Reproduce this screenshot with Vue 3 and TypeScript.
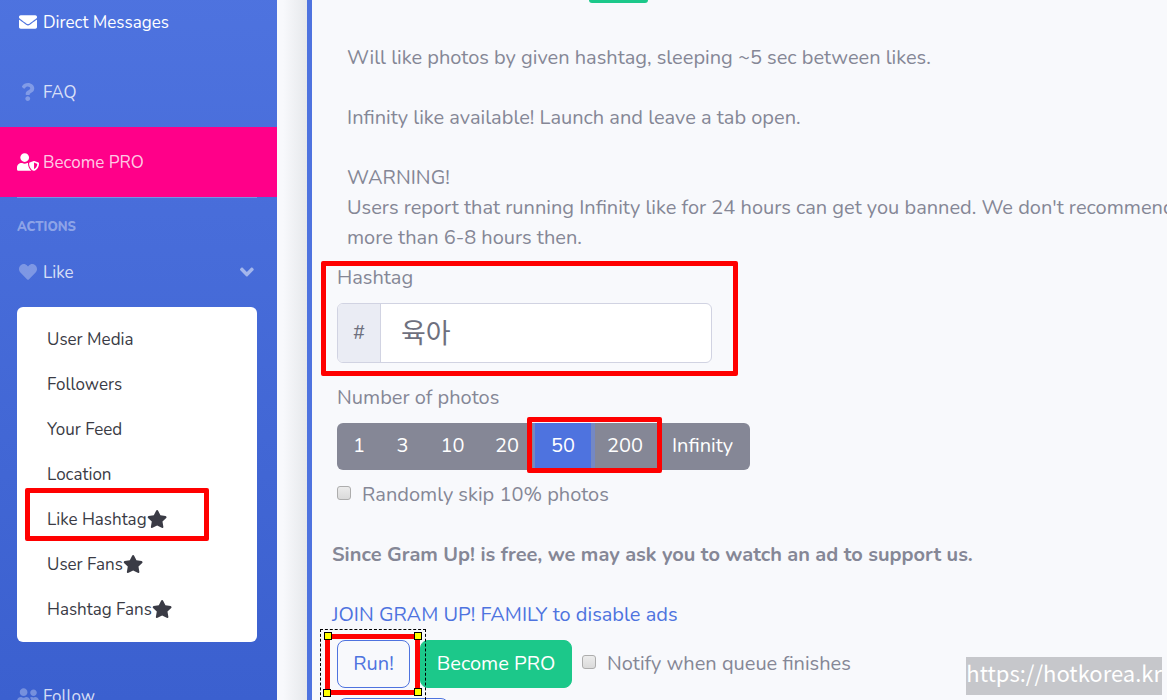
<script setup lang="ts">
import { ref } from 'vue'

interface Icon {
  box: string
  path: string
}

const icons: Record<string, Icon> = {
  envelope: {
    box: '0 0 512 512',
    path: 'M502.3 190.8c3.9-3.1 9.7-.2 9.7 4.7V400c0 26.5-21.5 48-48 48H48c-26.5 0-48-21.5-48-48V195.6c0-5 5.7-7.8 9.7-4.7 22.4 17.4 52.1 39.5 154.1 113.6 21.1 15.4 56.7 47.8 92.2 47.6 35.7.3 72-32.8 92.3-47.6 102-74.1 131.6-96.3 154-113.7zM256 320c23.2.4 56.6-29.2 73.4-41.4 132.7-96.3 142.8-104.7 173.4-128.7 5.8-4.5 9.2-11.5 9.2-18.9v-19c0-26.5-21.5-48-48-48H48c-26.5 0-48 21.5-48 48v19c0 7.4 3.4 14.3 9.2 18.9 30.6 23.9 40.7 32.4 173.4 128.7 16.8 12.2 50.2 41.8 73.4 41.4z',
  },
  question: {
    box: '0 0 384 512',
    path: 'M202.021 0C122.202 0 70.503 32.703 29.914 91.026c-7.363 10.58-5.093 25.086 5.178 32.874l43.138 32.709c10.373 7.865 25.132 6.026 33.253-4.148 25.049-31.381 43.63-49.449 82.757-49.449 30.764 0 68.816 19.799 68.816 49.631 0 22.552-18.617 34.134-48.993 51.164-35.423 19.86-82.299 44.576-82.299 106.405V320c0 13.255 10.745 24 24 24h72.471c13.255 0 24-10.745 24-24v-5.773c0-42.86 125.268-44.645 125.268-160.627C377.504 66.256 286.902 0 202.021 0zM192 373.459c-38.196 0-69.271 31.075-69.271 69.271 0 38.195 31.075 69.27 69.271 69.27s69.271-31.075 69.271-69.271-31.075-69.27-69.271-69.27z',
  },
  heart: {
    box: '0 0 512 512',
    path: 'M462.3 62.6C407.5 15.9 326 24.3 275.7 76.2L256 96.5l-19.7-20.3C186.1 24.3 104.5 15.9 49.7 62.6c-62.8 53.6-66.1 149.8-9.9 207.9l193.5 199.8c12.5 12.9 32.8 12.9 45.3 0l193.5-199.8c56.3-58.1 53-154.3-9.8-207.9z',
  },
  star: {
    box: '0 0 576 512',
    path: 'M259.3 17.8L194 150.2 47.9 171.5c-26.2 3.8-36.7 36.1-17.7 54.6l105.7 103-25 145.5c-4.5 26.3 23.2 46 46.4 33.7L288 439.6l130.7 68.7c23.2 12.2 50.9-7.4 46.4-33.7l-25-145.5 105.7-103c19-18.5 8.5-50.8-17.7-54.6L382 150.2 316.7 17.8c-11.7-23.6-45.6-23.9-57.4 0z',
  },
  angle: {
    box: '0 0 320 512',
    path: 'M143 352.3L7 216.3c-9.4-9.4-9.4-24.6 0-33.9l22.6-22.6c9.4-9.4 24.6-9.4 33.9 0l96.4 96.4 96.4-96.4c9.4-9.4 24.6-9.4 33.9 0l22.6 22.6c9.4 9.4 9.4 24.6 0 33.9l-136 136c-9.2 9.4-24.4 9.4-33.8 0z',
  },
  shield: {
    box: '0 0 640 512',
    path: 'M622.3 271.1l-115.2-45c-4.1-1.6-12.6-3.7-22.2 0l-115.2 45c-10.7 4.2-17.7 14-17.7 24.9 0 111.6 68.7 188.8 132.9 213.9 9.6 3.7 18 1.6 22.2 0C558.4 489.9 640 420.5 640 296c0-10.9-7-20.7-17.7-24.9zM496 462.4V273.3l95.5 37.3c-5.6 87.1-60.9 135.4-95.5 151.8zM224 256c70.7 0 128-57.3 128-128S294.7 0 224 0 96 57.3 96 128s57.3 128 128 128zm96 40c0-2.5.8-4.8 1.1-7.2-2.5-.1-4.9-.8-7.5-.8h-16.7c-22.2 10.2-46.9 16-72.9 16s-50.6-5.8-72.9-16h-16.7C60.2 288 0 348.2 0 422.4V464c0 26.5 21.5 48 48 48h352c6.8 0 13.3-1.5 19.2-4-54-42.9-99.2-116.7-99.2-212z',
  },
  friends: {
    box: '0 0 640 512',
    path: 'M192 256c61.9 0 112-50.1 112-112S253.9 32 192 32 80 82.1 80 144s50.1 112 112 112zm76.8 32h-8.3c-20.8 10-43.9 16-68.5 16s-47.6-6-68.5-16h-8.3C51.6 288 0 339.6 0 403.2V432c0 26.5 21.5 48 48 48h288c26.5 0 48-21.5 48-48v-28.8c0-63.6-51.6-115.2-115.2-115.2zM480 256c53 0 96-43 96-96s-43-96-96-96-96 43-96 96 43 96 96 96zm48 32h-3.8c-13.9 4.8-28.6 8-44.2 8s-30.3-3.2-44.2-8H432c-20.4 0-39.2 5.9-55.7 15.4 24.4 26.3 39.7 61.2 39.7 99.8v38.4c0 2.2-.5 4.3-.6 6.4H592c26.5 0 48-21.5 48-48 0-61.9-50.1-112-112-112z',
  },
}

const topLinks = [
  { label: 'Direct Messages', icon: icons.envelope, kind: 'active' },
  { label: 'FAQ', icon: icons.question, kind: '' },
  { label: 'Become PRO', icon: icons.shield, kind: 'pro' },
]

const likeLinks = [
  { label: 'User Media', star: false, marked: false },
  { label: 'Followers', star: false, marked: false },
  { label: 'Your Feed', star: false, marked: false },
  { label: 'Location', star: false, marked: false },
  { label: 'Like Hashtag', star: true, marked: true },
  { label: 'User Fans', star: true, marked: false },
  { label: 'Hashtag Fans', star: true, marked: false },
]

const amounts = ['1', '3', '10', '20', '50', '200', 'Infinity']
const amount = ref('50')
const hashtag = ref('육아')
const skip = ref(false)
const notify = ref(false)
</script>

<template>
  <div class="page">
    <nav class="sidebar">
      <a v-for="l in topLinks" :key="l.label" href="#" class="link" :class="l.kind">
        <span class="ico"><svg :viewBox="l.icon.box"><path :d="l.icon.path" /></svg></span>
        <span class="text">{{ l.label }}</span>
      </a>
      <hr class="divider" />
      <div class="heading">Actions</div>
      <a href="#" class="link like">
        <span class="ico"><svg :viewBox="icons.heart.box"><path :d="icons.heart.path" /></svg></span>
        <span class="text">Like</span>
        <svg class="caret" :viewBox="icons.angle.box"><path :d="icons.angle.path" /></svg>
      </a>
      <div class="card">
        <a v-for="l in likeLinks" :key="l.label" href="#" class="sub">
          <span class="text">{{ l.label }}</span>
          <svg v-if="l.star" class="star" :viewBox="icons.star.box"><path :d="icons.star.path" /></svg>
          <span v-if="l.marked" class="mark mark-link"></span>
        </a>
      </div>
      <a href="#" class="link follow">
        <span class="ico"><svg :viewBox="icons.friends.box"><path :d="icons.friends.path" /></svg></span>
        <span class="text">Follow</span>
      </a>
    </nav>
    <div class="gutter"></div>
    <main class="content">
      <div class="chip"></div>
      <div class="about">
        <p>Will like photos by given hashtag, sleeping ~5 sec between likes.</p>
        <p>Infinity like available! Launch and leave a tab open.</p>
        <p>
          WARNING!<br />
          Users report that running Infinity like for 24 hours can get you banned. We don't recommend<br />
          more than 6-8 hours then.
        </p>
      </div>
      <form class="form" @submit.prevent>
        <div class="field">
          <label for="tag">Hashtag</label>
          <div class="group">
            <span class="addon">#</span>
            <input id="tag" v-model="hashtag" type="text" />
          </div>
          <span class="mark mark-field"></span>
        </div>
        <div class="label">Number of photos</div>
        <div class="amounts">
          <button
            v-for="a in amounts"
            :key="a"
            type="button"
            :class="{ on: a === amount }"
            @click="amount = a"
          >{{ a }}</button>
          <span class="mark mark-amount"></span>
        </div>
        <label class="check"><input v-model="skip" type="checkbox" /><span>Randomly skip 10% photos</span></label>
      </form>
      <strong class="note">Since Gram Up! is free, we may ask you to watch an ad to support us.</strong>
      <a href="#" class="join">JOIN GRAM UP! FAMILY to disable ads</a>
      <div class="actions">
        <button type="button" class="run">Run!</button>
        <button type="button" class="pro-btn">Become PRO</button>
        <label class="check"><input v-model="notify" type="checkbox" /><span>Notify when queue finishes</span></label>
        <div class="selection">
          <span class="mark"></span>
          <i class="h tl"></i><i class="h tr"></i><i class="h bl"></i><i class="h br"></i>
        </div>
      </div>
      <div class="next"></div>
    </main>
    <div class="watermark">https://hotkorea.kr</div>
  </div>
</template>

<style>
body {
  margin: 0;
}
</style>

<style scoped>
.page {
  position: relative;
  display: flex;
  height: 100vh;
  overflow: hidden;
  background: #f8f9fc;
  color: #858796;
  font-family: Nunito, Lato, "Noto Sans CJK KR", sans-serif;
  font-size: 20px;
  line-height: 30px;
}
* {
  box-sizing: border-box;
}
a {
  text-decoration: none;
}
button,
input {
  font: inherit;
}
svg {
  display: block;
  fill: currentColor;
}

.sidebar {
  flex: 0 0 277px;
  background: linear-gradient(#4e73df, #3b60cf);
  font-size: 17px;
  line-height: 24px;
  margin-top: -13px;
}
.link {
  display: flex;
  align-items: center;
  gap: 4px;
  height: 70px;
  padding: 0 17px;
  color: rgba(255, 255, 255, 0.8);
}
.text {
  padding-top: 2px;
}
.ico {
  display: flex;
  justify-content: center;
  width: 22px;
  color: rgba(255, 255, 255, 0.3);
}
.ico svg {
  height: 18px;
}
.active,
.active .ico,
.pro .ico {
  color: #fff;
}
.pro {
  background: #ff0089;
}
.divider {
  height: 1px;
  margin: 0 20px 0 17px;
  border: 0;
  background: rgba(255, 255, 255, 0.25);
}
.heading {
  padding: 17px 17px 0;
  color: rgba(255, 255, 255, 0.4);
  font-size: 13px;
  font-weight: 800;
  text-transform: uppercase;
}
.like {
  height: 66px;
  margin-bottom: 2px;
}
.caret {
  height: 22px;
  margin: 0 6px 0 auto;
  color: rgba(255, 255, 255, 0.5);
}
.card {
  margin: 0 20px 19px 17px;
  padding: 9px 0 11px;
  border-radius: 6px;
  background: #fff;
}
.sub {
  position: relative;
  display: flex;
  align-items: center;
  height: 45px;
  padding-left: 30px;
  color: #3a3b45;
}
.star {
  height: 18px;
}

.mark {
  position: absolute;
  border: 5px solid #f00;
  border-radius: 2px;
  pointer-events: none;
}
.mark-link {
  inset: -8px 48px 0 8px;
}
.mark-field {
  inset: -1px -26px -13px -16px;
}
.mark-amount {
  inset: -6px 88px -3px 190px;
}

.gutter {
  flex: 0 0 30px;
  background: linear-gradient(90deg, #f8f9fc 20%, #e6e8eb);
}
.content {
  flex: 1;
  min-width: 0;
  padding-left: 20px;
  border-left: 5px solid #4e73df;
  white-space: nowrap;
}
.chip {
  width: 59px;
  height: 3px;
  margin-left: 257px;
  border-radius: 0 0 8px 8px;
  background: #1cc88a;
}
.about {
  padding: 40px 0 9px 15px;
}
.about p {
  margin: 0 0 30px;
}
.about p:last-child {
  margin: 0;
}
.form {
  padding-left: 5px;
}
.field {
  position: relative;
  width: 375px;
  margin-bottom: 20px;
}
.field label {
  display: block;
  padding: 1px 0 10px;
}
.group {
  display: flex;
  height: 60px;
  border: 1px solid #d1d3e2;
  border-radius: 6px;
  background: #fff;
  overflow: hidden;
}
.addon {
  display: flex;
  align-items: center;
  justify-content: center;
  width: 43px;
  border-right: 1px solid #d1d3e2;
  background: #eaecf4;
  color: #6e707e;
}
.group input {
  flex: 1;
  min-width: 0;
  padding: 4px 20px 0;
  border: 0;
  outline: 0;
  background: transparent;
  color: #6e707e;
  font-size: 27px;
}
.label {
  margin-bottom: 10px;
}
.amounts {
  position: relative;
  display: grid;
  grid-template-columns: 44px 43px 57px 52px 62px 60px 95px;
  width: max-content;
  height: 47px;
}
.amounts button {
  padding: 0 0 2px;
  border: 0;
  background: #858796;
  color: #fff;
}
.amounts button:first-child {
  border-radius: 6px 0 0 6px;
}
.amounts button:nth-child(7) {
  border-radius: 0 6px 6px 0;
}
.amounts .on {
  border: solid #7488c4;
  border-width: 0 4px 0 2px;
  background: #4e73df;
}
.check {
  display: flex;
  align-items: center;
  gap: 11px;
}
.form .check {
  margin: 10px 0 30px;
}
.check input {
  appearance: none;
  width: 14px;
  height: 14px;
  margin: 0 0 4px;
  border: 1px solid #adadad;
  border-radius: 3px;
  background: linear-gradient(#ececec, #dadada);
}
.note,
.join {
  display: block;
  margin-bottom: 30px;
}
.join {
  margin-bottom: 10px;
  color: #4e73df;
}
.actions {
  position: relative;
  display: flex;
  align-items: center;
  padding-left: 5px;
}
.run,
.pro-btn {
  height: 48px;
  padding: 0;
  border: 1px solid #4e73df;
  border-radius: 8px;
  background: transparent;
  color: #4e73df;
}
.run {
  width: 73px;
  margin-right: 10px;
}
.pro-btn {
  width: 152px;
  margin-right: 10px;
  border-color: #1cc88a;
  background: #1cc88a;
  color: #fff;
}
.selection {
  position: absolute;
  top: -11px;
  left: -12px;
  width: 106px;
  height: 76px;
  border: 1px dashed #000;
}
.selection .mark {
  inset: 4px 5px 9px 4px;
}
.h {
  position: absolute;
  width: 8px;
  height: 8px;
  border: 1px solid #000;
  background: #ff0;
}
.tl { top: 2px; left: 3px; }
.tr { top: 2px; right: 3px; }
.bl { bottom: 7px; left: 2px; }
.br { bottom: 8px; right: 3px; }
.next {
  width: 111px;
  height: 48px;
  margin: 10px 0 0 6px;
  border: 1px solid #4e73df;
  border-radius: 8px;
}
.watermark {
  position: absolute;
  right: 5px;
  bottom: 5px;
  height: 38px;
  background: #c6c7cb;
  color: #fff;
  font-family: "Noto Sans CJK KR", "Noto Sans", sans-serif;
  font-size: 22px;
  line-height: 30px;
}
</style>
